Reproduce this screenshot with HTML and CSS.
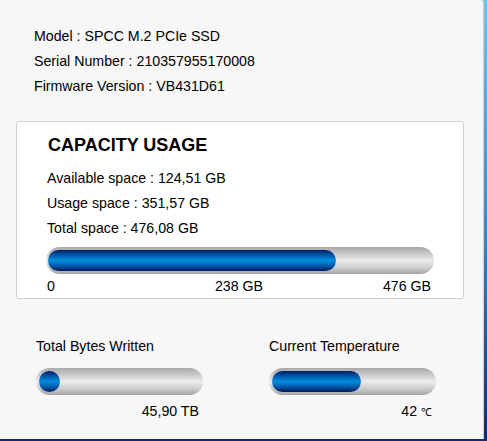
FILE: index.html
```html
<!DOCTYPE html>
<html>
<head>
<meta charset="utf-8">
<link rel="stylesheet" href="styles.css">
</head>
<body>
<div class="window">
  <div class="panel">
    <div class="info">
      <div class="line">Model : SPCC M.2 PCIe SSD</div>
      <div class="line">Serial Number : 210357955170008</div>
      <div class="line">Firmware Version : VB431D61</div>
    </div>
    <div class="card">
      <div class="title">CAPACITY USAGE</div>
      <div class="line">Available space : 124,51 GB</div>
      <div class="line">Usage space : 351,57 GB</div>
      <div class="line">Total space : 476,08 GB</div>
      <div class="track big"><div class="fill" style="width:75%"></div></div>
      <div class="scale"><span>0</span><span>238 GB</span><span class="end">476 GB</span></div>
    </div>
    <div class="stats">
      <div class="stat">
        <div class="label">Total Bytes Written</div>
        <div class="track small"><div class="fill dot"></div></div>
        <div class="value">45,90 TB</div>
      </div>
      <div class="stat">
        <div class="label">Current Temperature</div>
        <div class="track small"><div class="fill" style="width:55%"></div></div>
        <div class="value">42 <span class="unit">℃</span></div>
      </div>
    </div>
  </div>
</div>
</body>
</html>
```
FILE: styles.css
```css
html, body {
  margin: 0;
  padding: 0;
  background: #1a3272;
}
.window {
  width: 487px;
  height: 441px;
  box-sizing: border-box;
  background: linear-gradient(to bottom, #6cc6f0 0%, #3f82c8 55%, #14286e 100%);
  padding: 0 3px 2px 0;
  position: relative;
}
.window::after {
  content: "";
  position: absolute;
  left: 0;
  right: 0;
  bottom: 0;
  height: 2px;
  background: #152a6a;
}
.panel {
  width: 100%;
  height: 100%;
  box-sizing: border-box;
  background: #f7f7f7;
  border-right: 1px solid #cfcfcf;
  border-top-right-radius: 3px;
  font-family: "Liberation Sans", Arial, sans-serif;
  font-size: 14.2px;
  color: #000;
  padding: 24px 0 0 16px;
}
.info {
  padding-left: 18px;
}
.line {
  height: 25px;
  line-height: 25px;
}
.card {
  margin-top: 22px;
  width: 448px;
  height: 178px;
  box-sizing: border-box;
  background: #fff;
  border: 1px solid #d0d0d0;
  border-radius: 3px;
  padding: 8px 0 0 30px;
}
.title {
  font-weight: bold;
  font-size: 18px;
  height: 30px;
  line-height: 30px;
  margin-left: 1px;
  margin-bottom: 6px;
}
.track {
  box-sizing: border-box;
  border-radius: 14px;
  background: linear-gradient(to bottom, #a9a9a9 0%, #c8c8c8 25%, #ececec 50%, #cfcfcf 75%, #a3a3a3 100%);
  padding: 3px;
}
.track.big {
  width: 388px;
  height: 27px;
  margin-top: 6px;
  margin-left: -1px;
  padding: 3px 2px;
}
.fill {
  height: 100%;
  border-radius: 11px;
  background: linear-gradient(to bottom, #001d63 0%, #0058ac 25%, #008cdc 50%, #005aad 75%, #001a5c 100%);
}
.scale {
  width: 384px;
  display: grid;
  grid-template-columns: 1fr auto 1fr;
  height: 24px;
  line-height: 24px;
}
.scale .end {
  justify-self: end;
}
.stats {
  display: flex;
  padding: 36px 0 0 20px;
}
.stat {
  flex: none;
  width: 233px;
}
.label {
  height: 22px;
  line-height: 22px;
}
.track.small {
  width: 167px;
  height: 27px;
  margin-top: 11px;
  padding: 3px;
}
.fill.dot {
  width: 21px;
}
.value {
  width: 163px;
  text-align: right;
  height: 32px;
  line-height: 32px;
}
.unit {
  font-size: 11px;
}
```
